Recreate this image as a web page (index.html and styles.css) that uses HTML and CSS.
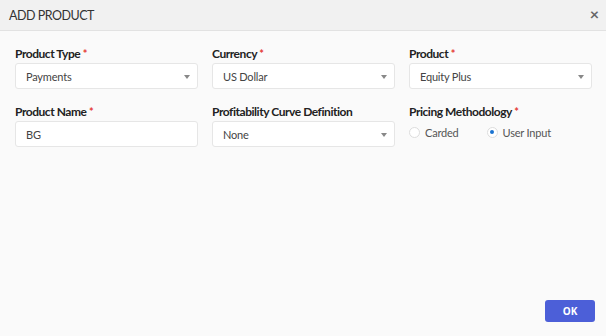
FILE: index.html
```html
<!DOCTYPE html>
<html>
<head>
<meta charset="utf-8">
<link rel="stylesheet" href="styles.css">
</head>
<body>
<div class="dialog">
  <div class="header">
    <span class="title">ADD PRODUCT</span>
    <span class="close">&#215;</span>
  </div>
  <div class="body">
    <div class="grid">
      <div class="field">
        <label class="label">Product Type <span class="req">*</span></label>
        <div class="box select">Payments<span class="caret"></span></div>
      </div>
      <div class="field">
        <label class="label">Currency <span class="req">*</span></label>
        <div class="box select">US Dollar<span class="caret"></span></div>
      </div>
      <div class="field">
        <label class="label">Product <span class="req">*</span></label>
        <div class="box select">Equity Plus<span class="caret"></span></div>
      </div>
      <div class="field">
        <label class="label">Product Name <span class="req">*</span></label>
        <div class="box">BG</div>
      </div>
      <div class="field">
        <label class="label">Profitability Curve Definition</label>
        <div class="box select">None<span class="caret"></span></div>
      </div>
      <div class="field">
        <label class="label">Pricing Methodology <span class="req">*</span></label>
        <div class="radios">
          <span class="radio"><span class="dot"></span>Carded</span>
          <span class="radio on"><span class="dot"></span>User Input</span>
        </div>
      </div>
    </div>
    <div class="footer">
      <button class="ok">OK</button>
    </div>
  </div>
</div>
</body>
</html>
```
FILE: styles.css
```css
html, body {
  margin: 0;
  padding: 0;
}
body {
  font-family: Lato, "Open Sans", sans-serif;
  color: #333;
  background: #fafafa;
}
.dialog {
  width: 606px;
  height: 336px;
  display: flex;
  flex-direction: column;
  background: #fafafa;
}
.header {
  height: 31px;
  box-sizing: border-box;
  background: #f1f1f1;
  border-bottom: 1px solid #e2e2e2;
  display: flex;
  align-items: center;
  justify-content: space-between;
  padding: 0 7px 0 9px;
}
.title {
  font-size: 12.5px;
  letter-spacing: -0.5px;
  color: #333;
}
.close {
  font-size: 16px;
  font-weight: 700;
  color: #666;
  line-height: 1;
  margin-top: -3px;
}
.body {
  flex: 1;
  display: flex;
  flex-direction: column;
  padding: 14px 15px 14px 15px;
}
.grid {
  display: grid;
  grid-template-columns: 183px 183px 183px;
  column-gap: 14px;
  row-gap: 14px;
}
.field {
  display: flex;
  flex-direction: column;
}
.label {
  font-size: 12px;
  font-weight: 700;
  letter-spacing: -0.45px;
  color: #222;
  height: 17px;
  line-height: 17px;
  margin-bottom: 1px;
}
.req {
  color: #e53935;
  font-size: 11px;
  letter-spacing: 0;
}
.box {
  height: 26px;
  box-sizing: border-box;
  background: #fff;
  border: 1px solid #e6e6e6;
  border-radius: 3px;
  font-size: 11px;
  letter-spacing: -0.2px;
  color: #444;
  display: flex;
  align-items: center;
  padding: 1px 10px 0 10px;
  position: relative;
}
.caret {
  position: absolute;
  right: 7px;
  top: 11px;
  width: 0;
  height: 0;
  border-left: 3.5px solid transparent;
  border-right: 3.5px solid transparent;
  border-top: 4px solid #888;
}
.radios {
  display: flex;
  align-items: center;
  height: 22px;
  font-size: 11px;
  letter-spacing: -0.2px;
  color: #555;
}
.radio {
  display: flex;
  align-items: center;
  margin-right: 28px;
}
.dot {
  width: 11px;
  height: 11px;
  box-sizing: border-box;
  border: 1px solid #ddd;
  border-radius: 50%;
  background: #fff;
  margin-right: 5px;
  position: relative;
}
.radio.on .dot::after {
  content: "";
  position: absolute;
  left: 2.5px;
  top: 2.5px;
  width: 4px;
  height: 4px;
  border-radius: 50%;
  background: #1a73d0;
}
.footer {
  margin-top: auto;
  display: flex;
  justify-content: flex-end;
}
.ok {
  width: 50px;
  height: 22px;
  margin-right: -4px;
  border: none;
  border-radius: 3px;
  background: #4c5fd8;
  color: #fff;
  font-family: "Open Sans", sans-serif;
  font-weight: 700;
  font-size: 10px;
}
```
